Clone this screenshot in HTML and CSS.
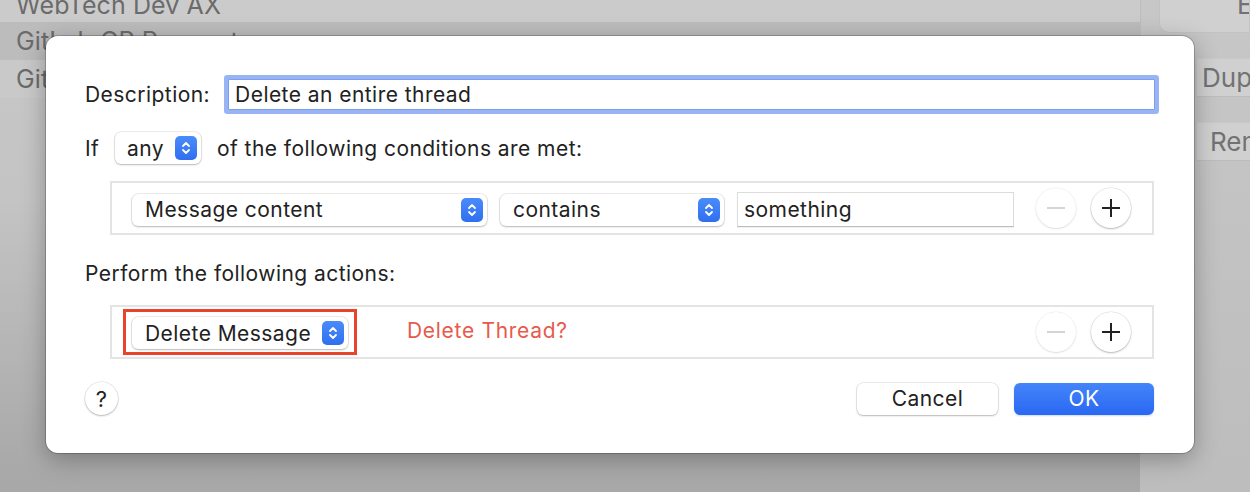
FILE: index.html
```html
<!DOCTYPE html>
<html>
<head>
<meta charset="utf-8">
<link rel="stylesheet" href="styles.css">
</head>
<body>
<div class="app">
  <div class="list">
    <div class="row row-first">WebTech Dev AX</div>
    <div class="row row-sel">GitLab CP Requests</div>
    <div class="row">GitLab</div>
    <div class="list-rest"></div>
  </div>
  <div class="side">
    <div class="side-btn side-top">Edit</div>
    <div class="side-btn">Duplicate</div>
    <div class="side-btn side-rem">Remove</div>
  </div>
</div>

<div class="sheet">
  <div class="line line-desc">
    <span class="label">Description:</span>
    <div class="field focus">Delete an entire thread</div>
  </div>

  <div class="line line-if">
    <span class="label">If</span>
    <div class="popup popup-any"><span>any</span><span class="step"><svg width="10" height="16" viewBox="0 0 10 16"><path d="M2 6 L5 3 L8 6 M2 10 L5 13 L8 10" fill="none" stroke="#fff" stroke-width="1.8" stroke-linecap="round" stroke-linejoin="round"/></svg></span></div>
    <span class="label">of the following conditions are met:</span>
  </div>

  <div class="box box-cond">
    <div class="popup popup-field"><span>Message content</span><span class="step"><svg width="10" height="16" viewBox="0 0 10 16"><path d="M2 6 L5 3 L8 6 M2 10 L5 13 L8 10" fill="none" stroke="#fff" stroke-width="1.8" stroke-linecap="round" stroke-linejoin="round"/></svg></span></div>
    <div class="popup popup-op"><span>contains</span><span class="step"><svg width="10" height="16" viewBox="0 0 10 16"><path d="M2 6 L5 3 L8 6 M2 10 L5 13 L8 10" fill="none" stroke="#fff" stroke-width="1.8" stroke-linecap="round" stroke-linejoin="round"/></svg></span></div>
    <div class="field value">something</div>
    <div class="spacer"></div>
    <div class="circle disabled"><svg width="20" height="20" viewBox="0 0 20 20"><path d="M1 10 H19" stroke="#d4d4d4" stroke-width="2"/></svg></div>
    <div class="circle"><svg width="20" height="20" viewBox="0 0 20 20"><path d="M1 10 H19 M10 1 V19" stroke="#222" stroke-width="2"/></svg></div>
  </div>

  <div class="line line-perform">
    <span class="label">Perform the following actions:</span>
  </div>

  <div class="box box-act">
    <div class="highlight">
      <div class="popup popup-act"><span>Delete Message</span><span class="step"><svg width="10" height="16" viewBox="0 0 10 16"><path d="M2 6 L5 3 L8 6 M2 10 L5 13 L8 10" fill="none" stroke="#fff" stroke-width="1.8" stroke-linecap="round" stroke-linejoin="round"/></svg></span></div>
    </div>
    <span class="note">Delete Thread?</span>
    <div class="spacer"></div>
    <div class="circle disabled"><svg width="20" height="20" viewBox="0 0 20 20"><path d="M1 10 H19" stroke="#d4d4d4" stroke-width="2"/></svg></div>
    <div class="circle"><svg width="20" height="20" viewBox="0 0 20 20"><path d="M1 10 H19 M10 1 V19" stroke="#222" stroke-width="2"/></svg></div>
  </div>

  <div class="footer">
    <div class="help">?</div>
    <div class="spacer"></div>
    <div class="btn cancel">Cancel</div>
    <div class="btn ok">OK</div>
  </div>
</div>
</body>
</html>
```

FILE: styles.css
```css
* { box-sizing: border-box; }
html, body { margin: 0; padding: 0; }
body {
  width: 1250px;
  height: 492px;
  overflow: hidden;
  position: relative;
  font-family: Inter, "Liberation Sans", sans-serif;
  background: #b4b4b4;
}

/* background app */
.app {
  display: flex;
  height: 492px;
}
.list {
  width: 1140px;
  display: flex;
  flex-direction: column;
  background: linear-gradient(#c8c8c8 0px, #c4c4c4 200px, #a8a8a8 480px);
}
.row {
  height: 38px;
  flex: none;
  padding-left: 16px;
  font-size: 25px;
  letter-spacing: 0.1px;
  line-height: 38px;
  color: #6b6b6b;
  background: #c9c9c9;
}
.row-first {
  height: 22px;
  line-height: 10px;
  background: #cbcbcb;
  overflow: hidden;
}
.row-sel { background: #bcbcbc; }
.list-rest { flex: 1; }
.side {
  width: 110px;
  display: flex;
  flex-direction: column;
  gap: 25px;
  border-left: 1px solid #bdbdbd;
  background: linear-gradient(#c7c7c7 0px, #c2c2c2 250px, #bdbdbd 480px);
  padding-left: 56px;
}
.side-btn {
  height: 39px;
  background: #d0d0d0;
  border-top: 1px solid #c8c8c8;
  border-bottom: 1px solid #bcbcbc;
  font-size: 26px;
  line-height: 38px;
  color: #727272;
  white-space: nowrap;
  overflow: hidden;
  padding-left: 5px;
}
.side-rem { padding-left: 13px; }
.side-top {
  height: 33px;
  line-height: 10px;
  margin-left: -38px;
  padding-left: 77px;
  border-radius: 0 0 0 10px;
  border: 1px solid #c2c2c2;
  border-top: none;
}

/* dialog (overlays the app) */
.sheet {
  position: absolute;
  left: 46px;
  top: 36px;
  width: 1148px;
  height: 417px;
  background: #fff;
  border-radius: 12px;
  box-shadow: 0 0 0 1px rgba(0,0,0,0.2), 0 6px 24px rgba(0,0,0,0.3);
  padding: 39px 40px 0 39px;
  display: flex;
  flex-direction: column;
  color: #222;
  font-size: 21px;
  letter-spacing: 0.45px;
}
.line {
  display: flex;
  align-items: center;
}
.label { white-space: nowrap; }
.line-desc { height: 39px; gap: 14px; }
.field {
  background: #fff;
  padding-left: 6px;
  display: flex;
  align-items: center;
  color: #222;
}
.field.focus {
  flex: 1;
  height: 31px;
  margin: 0 -1px 0 4px;
  border: 1px solid #7d9ded;
  box-shadow: 0 0 0 4px #98b4f4;
  border-radius: 1px;
}
.line-if { height: 32px; margin-top: 18px; }
.line-if .label:first-child { width: 30px; }
.popup {
  height: 32px;
  display: flex;
  align-items: center;
  justify-content: space-between;
  padding: 0 4px 0 13px;
  background: #fff;
  border-radius: 6px;
  box-shadow: 0 0 0 0.5px rgba(0,0,0,0.14), 0 1px 2px rgba(0,0,0,0.22);
  white-space: nowrap;
}
.popup-any { width: 86px; margin-right: 16px; padding-left: 12px; }
.step {
  width: 22px;
  height: 24px;
  border-radius: 5px;
  background: linear-gradient(#4a8cfb, #2f6ff0);
  display: flex;
  align-items: center;
  justify-content: center;
}
.box {
  margin-left: 25px;
  border: 2px solid #e4e4e4;
  display: flex;
  align-items: center;
  padding: 3px 21px 0 20px;
}
.box-cond { height: 54px; margin-top: 17px; }
.popup-field { width: 355px; margin-right: 13px; }
.popup-op { width: 224px; margin-right: 13px; }
.field.value {
  width: 277px;
  height: 35px;
  border: 1px solid #dcdcdc;
  border-bottom-color: #bdbdbd;
  box-shadow: 0 1px 1px rgba(0,0,0,0.06);
}
.spacer { flex: 1; }
.circle {
  width: 40px;
  height: 40px;
  border-radius: 50%;
  background: #fff;
  box-shadow: 0 0 0 0.5px rgba(0,0,0,0.12), 0 1px 2px rgba(0,0,0,0.24);
  display: flex;
  align-items: center;
  justify-content: center;
  margin-left: 15px;
  margin-top: -3px;
}
.circle.disabled {
  box-shadow: 0 0 0 0.5px rgba(0,0,0,0.07), 0 1px 2px rgba(0,0,0,0.1);
}
.line-perform { height: 24px; margin-top: 26px; }
.box-act { height: 54px; margin-top: 20px; padding-left: 11px; padding-top: 0; }
.highlight {
  border: 3px solid #e8432d;
  padding: 5px 6px 3px 6px;
  display: flex;
}
.box-act .circle { margin-top: 0; }
.popup-act { width: 216px; }
.note {
  margin-left: 50px;
  margin-top: -4px;
  color: #e85a4b;
  font-size: 21px;
  letter-spacing: 0.7px;
}
.footer {
  display: flex;
  align-items: center;
  height: 33px;
  margin-top: 23px;
}
.help {
  width: 33px;
  height: 33px;
  border-radius: 50%;
  background: #fff;
  box-shadow: 0 0 0 0.5px rgba(0,0,0,0.12), 0 1px 2px rgba(0,0,0,0.24);
  display: flex;
  align-items: center;
  justify-content: center;
  font-size: 22px;
  color: #222;
}
.btn {
  width: 141px;
  height: 32px;
  border-radius: 6px;
  display: flex;
  align-items: center;
  justify-content: center;
  font-size: 21px;
}
.cancel {
  background: #fff;
  box-shadow: 0 0 0 0.5px rgba(0,0,0,0.14), 0 1px 2px rgba(0,0,0,0.22);
  margin-right: 16px;
  color: #222;
}
.ok {
  width: 140px;
  background: linear-gradient(#4485f8, #2a67f3);
  color: #fff;
  box-shadow: 0 1px 2px rgba(40,100,240,0.25);
}
```
